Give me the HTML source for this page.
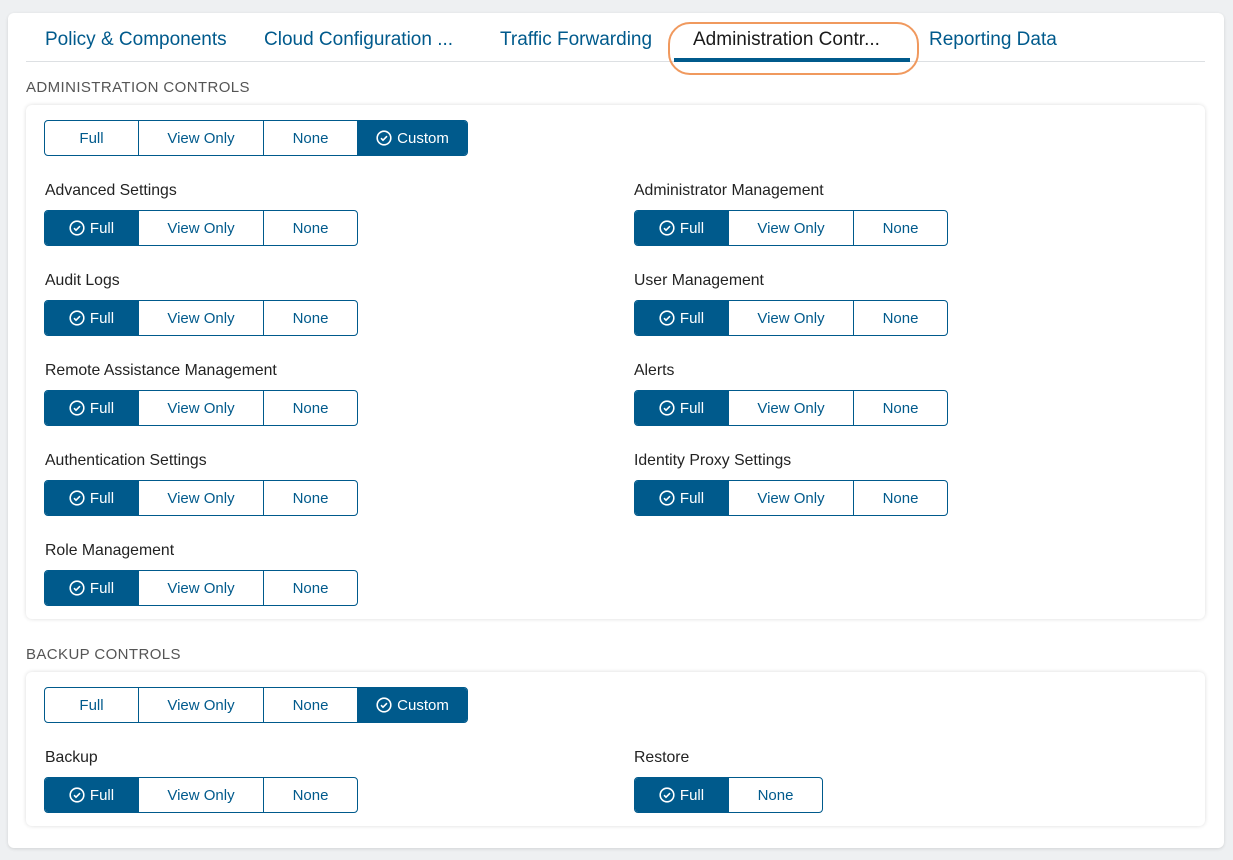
<!DOCTYPE html>
<html><head><meta charset="utf-8"><style>
*{box-sizing:border-box;margin:0;padding:0}
body{width:1233px;height:860px;background:#eef0f2;font-family:"Liberation Sans",sans-serif;position:relative;overflow:hidden}
.outer{position:absolute;left:8px;top:13px;width:1216px;height:835px;background:#fff;border-radius:6px;box-shadow:0 1px 3px rgba(0,0,0,.12)}
.tab{position:absolute;top:29px;font-size:19px;color:#005a8c;white-space:nowrap}
.line{position:absolute;left:26px;top:61px;width:1179px;height:1px;background:#dde0e3}
.hl{position:absolute;left:668px;top:22px;width:251px;height:53px;border:2px solid #f0995e;border-radius:22px}
.ul{position:absolute;left:674px;top:58px;width:236px;height:4px;background:#005a8c}
.sec{position:absolute;left:26px;font-size:15px;color:#555;letter-spacing:.4px}
.card{position:absolute;left:26px;width:1179px;background:#fff;border-radius:6px;box-shadow:0 0 4px rgba(0,0,0,.14)}
.lbl{position:absolute;font-size:15.8px;color:#222}
.g{position:absolute;display:flex;height:36px;border:1px solid #005a8c;border-radius:4px;overflow:hidden}
.g div{display:flex;align-items:center;justify-content:center;font-size:15px;color:#005a8c;border-left:1px solid #005a8c;height:100%}
.g div:first-child{border-left:none}
.g div.on{background:#005a8c;color:#fff}
.g svg{margin-right:5px}
</style></head><body>
<div class="outer"></div>
<div class="tab" style="left:45px">Policy &amp; Components</div>
<div class="tab" style="left:264px">Cloud Configuration ...</div>
<div class="tab" style="left:500px">Traffic Forwarding</div>
<div class="tab" style="left:693px;color:#1a1a1a">Administration Contr...</div>
<div class="tab" style="left:929px">Reporting Data</div>
<div class="line"></div>
<div class="ul"></div>
<div class="hl"></div>

<div class="sec" style="top:79px">ADMINISTRATION CONTROLS</div>
<div class="card" style="top:105px;height:514px"></div>
<div class="sec" style="top:646px">BACKUP CONTROLS</div>
<div class="card" style="top:672px;height:154px"></div>

<div id="c"></div>
<script>
var ck='<svg width="16" height="16" viewBox="0 0 16 16"><circle cx="8" cy="8" r="6.8" fill="none" stroke="#fff" stroke-width="1.6"/><path d="M5 8.2l2 2 4-4" fill="none" stroke="#fff" stroke-width="1.6"/></svg>';
function g(x,y,segs){var h='<div class="g" style="left:'+x+'px;top:'+y+'px">';
segs.forEach(function(s){h+='<div class="'+(s[2]?'on':'')+'" style="width:'+s[1]+'px">'+(s[2]?ck:'')+s[0]+'</div>'});return h+'</div>';}
function l(x,y,t){return '<div class="lbl" style="left:'+x+'px;top:'+y+'px">'+t+'</div>';}
var top4=[['Full',93],['View Only',125],['None',94],['Custom',110,1]];
var three=[['Full',93,1],['View Only',125],['None',94]];
var h='';
h+=g(44,120,top4);
var L=['Advanced Settings','Audit Logs','Remote Assistance Management','Authentication Settings','Role Management'];
var R=['Administrator Management','User Management','Alerts','Identity Proxy Settings'];
L.forEach(function(t,i){h+=l(45,182+90*i,t)+g(44,210+90*i,three)});
R.forEach(function(t,i){h+=l(634,182+90*i,t)+g(634,210+90*i,three)});
h+=g(44,687,top4);
h+=l(45,749,'Backup')+g(44,777,three);
h+=l(634,749,'Restore')+g(634,777,[['Full',93,1],['None',94]]);
document.getElementById('c').innerHTML=h;
</script>
</body></html>
